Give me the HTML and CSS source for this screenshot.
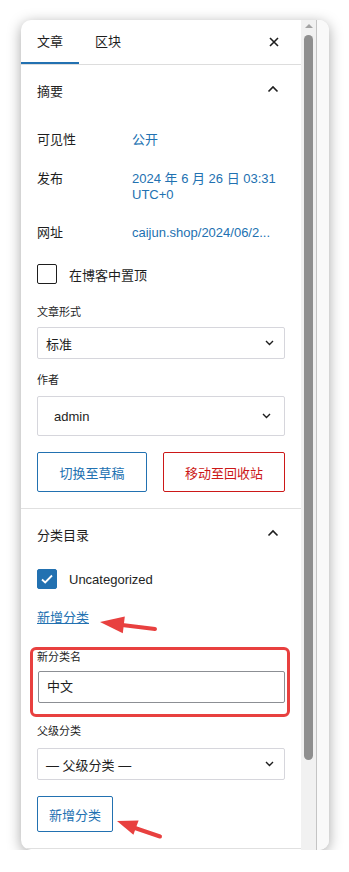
FILE: index.html
```html
<!DOCTYPE html>
<html lang="zh-CN">
<head>
    <meta charset="UTF-8">
    <meta name="viewport" content="width=device-width, initial-scale=1.0">
    <title>文章设置</title>
    <link rel="stylesheet" href="styles.css">
</head>
<body>
    <div class="window">
        <div class="panel">
            <div class="tabs">
                <div class="tab active">文章</div>
                <div class="tab">区块</div>
                <span class="close">
                    <svg width="12" height="12" viewBox="0 0 12 12"><path d="M2 2l8 8M10 2l-8 8" stroke="#1e1e1e" stroke-width="1.6" fill="none"/></svg>
                </span>
            </div>

            <section class="section">
                <div class="section-head">
                    <span>摘要</span>
                    <svg class="chevron" width="12" height="8" viewBox="0 0 12 8"><path d="M1.5 6.5L6 2l4.5 4.5" stroke="#1e1e1e" stroke-width="1.6" fill="none"/></svg>
                </div>
                <div class="section-body">
                    <div class="row">
                        <span class="row-label">可见性</span>
                        <span class="row-value">公开</span>
                    </div>
                    <div class="row row-date">
                        <span class="row-label">发布</span>
                        <span class="row-value">2024 年 6 月 26 日 03:31 UTC+0</span>
                    </div>
                    <div class="row row-url">
                        <span class="row-label">网址</span>
                        <span class="row-value">caijun.shop/2024/06/2...</span>
                    </div>
                    <label class="check check-sticky">
                        <span class="box"></span>
                        <span>在博客中置顶</span>
                    </label>
                    <div class="field-label label-format">文章形式</div>
                    <div class="select select-format">
                        <span>标准</span>
                        <svg width="9" height="6" viewBox="0 0 9 6"><path d="M1 1l3.5 3.5L8 1" stroke="#1e1e1e" stroke-width="1.4" fill="none"/></svg>
                    </div>
                    <div class="field-label label-author">作者</div>
                    <div class="select select-author">
                        <span>admin</span>
                        <svg width="9" height="6" viewBox="0 0 9 6"><path d="M1 1l3.5 3.5L8 1" stroke="#1e1e1e" stroke-width="1.4" fill="none"/></svg>
                    </div>
                    <div class="actions">
                        <span class="btn btn-draft">切换至草稿</span>
                        <span class="btn btn-trash">移动至回收站</span>
                    </div>
                </div>
            </section>

            <section class="section section-cats">
                <div class="section-head">
                    <span>分类目录</span>
                    <svg class="chevron" width="12" height="8" viewBox="0 0 12 8"><path d="M1.5 6.5L6 2l4.5 4.5" stroke="#1e1e1e" stroke-width="1.6" fill="none"/></svg>
                </div>
                <div class="section-body">
                    <label class="check">
                        <span class="box checked">
                            <svg width="14" height="12" viewBox="0 0 14 12"><path d="M2 6.5l3.2 3L12 2.5" stroke="#fff" stroke-width="1.8" fill="none"/></svg>
                        </span>
                        <span class="latin">Uncategorized</span>
                    </label>
                    <a class="add-link" href="#">新增分类</a>
                    <div class="field-label label-name">新分类名</div>
                    <div class="text-input">中文</div>
                    <div class="field-label label-parent">父级分类</div>
                    <div class="select select-parent">
                        <span>— 父级分类 —</span>
                        <svg width="9" height="6" viewBox="0 0 9 6"><path d="M1 1l3.5 3.5L8 1" stroke="#1e1e1e" stroke-width="1.4" fill="none"/></svg>
                    </div>
                    <span class="btn btn-add">新增分类</span>
                </div>
                <div class="highlight"></div>
            </section>
        </div>

        <div class="scrollbar">
            <span class="scroll-up"></span>
            <span class="scroll-thumb"></span>
        </div>
        <div class="edge"></div>

        <svg class="arrow arrow-link" width="64" height="26" viewBox="0 0 64 26">
            <path d="M22 14.5L59 19" stroke="#e8403f" stroke-width="4" stroke-linecap="round" fill="none"/>
            <polygon points="4,12 28.8,6.6 26.8,23.2" fill="#e8403f"/>
        </svg>
        <svg class="arrow arrow-btn" width="52" height="30" viewBox="0 0 52 30">
            <path d="M19 15L47 24.5" stroke="#e8403f" stroke-width="4" stroke-linecap="round" fill="none"/>
            <polygon points="4,9 25.6,8.4 20.4,22.8" fill="#e8403f"/>
        </svg>
    </div>
</body>
</html>
```

FILE: styles.css
```css
* {
    box-sizing: border-box;
}
body {
    margin: 0;
    padding: 20px 0 0 21px;
    background-color: #ffffff;
    font-family: "Liberation Sans", "Noto Sans CJK SC", sans-serif;
    font-size: 13px;
    color: #1e1e1e;
}
.window {
    position: relative;
    display: flex;
    width: 308px;
    height: 830px;
    background-color: #ffffff;
    border-radius: 10px;
    overflow: hidden;
    box-shadow: 0 3px 14px rgba(0, 0, 0, 0.35);
}
.panel {
    width: 280px;
    flex-shrink: 0;
}
.tabs {
    display: flex;
    align-items: center;
    height: 45px;
    border-bottom: 1px solid #dddddd;
}
.tab {
    height: 44px;
    line-height: 44px;
    padding: 0 16px;
    width: 58px;
}
.tab.active {
    box-shadow: inset 0 -2px 0 #2271b1;
}
.close {
    margin-left: auto;
    margin-right: 21px;
    display: flex;
}
.section {
    position: relative;
    border-bottom: 1px solid #e0e0e0;
}
.section-head {
    display: flex;
    align-items: center;
    justify-content: space-between;
    height: 50px;
    padding: 0 22px 0 16px;
}
.chevron {
    margin-top: -2px;
}
.section-body {
    display: flex;
    flex-direction: column;
    padding: 17px 16px 16px;
}
.row {
    display: flex;
    line-height: 16px;
}
.row-label {
    width: 95px;
    flex-shrink: 0;
}
.row-value {
    color: #2271b1;
}
.row-date {
    margin-top: 23px;
}
.row-url {
    margin-top: 22px;
}
.check {
    display: flex;
    align-items: center;
    gap: 12px;
    height: 20px;
}
.check-sticky {
    margin-top: 23px;
}
.box {
    width: 20px;
    height: 20px;
    border: 1px solid #1e1e1e;
    border-radius: 2px;
    display: flex;
    align-items: center;
    justify-content: center;
}
.box.checked {
    background-color: #2271b1;
    border-color: #2271b1;
}
.field-label {
    font-size: 11px;
    line-height: 16px;
}
.label-format {
    margin-top: 20px;
}
.label-author {
    margin-top: 13px;
}
.select {
    display: flex;
    align-items: center;
    justify-content: space-between;
    height: 32px;
    padding: 0 10px 0 8px;
    border: 1px solid #d6d6dc;
    border-radius: 2px;
    margin-top: 7px;
}
.select-author {
    height: 40px;
    margin-top: 8px;
    padding: 0 13px 0 16px;
}
.actions {
    display: flex;
    gap: 16px;
    margin-top: 16px;
}
.btn {
    display: flex;
    align-items: center;
    justify-content: center;
    height: 40px;
    border: 1px solid #2271b1;
    border-radius: 2px;
    color: #2271b1;
}
.btn-draft {
    width: 110px;
}
.btn-trash {
    flex: 1;
    border-color: #cc1818;
    color: #cc1818;
}
.section-cats .section-body {
    padding-top: 10px;
}
.add-link {
    margin-top: 21px;
    line-height: 16px;
    color: #2271b1;
    align-self: flex-start;
}
.label-name {
    margin-top: 23px;
}
.text-input {
    height: 32px;
    line-height: 30px;
    margin-top: 6px;
    margin-left: 1px;
    padding: 0 8px;
    border: 1px solid #8c8f94;
    border-radius: 2px;
}
.label-parent {
    margin-top: 20px;
}
.select-parent {
    margin-top: 9px;
}
.btn-add {
    align-self: flex-start;
    width: 76px;
    height: 36px;
    margin-top: 16px;
}
.highlight {
    position: absolute;
    left: 9px;
    top: 138px;
    width: 260px;
    height: 70px;
    border: 3px solid #e8403f;
    border-radius: 6px;
}
.scrollbar {
    width: 15px;
    flex-shrink: 0;
    background-color: #f1f1f1;
    display: flex;
    flex-direction: column;
    align-items: center;
}
.scroll-up {
    margin-top: 4px;
    width: 0;
    height: 0;
    border-left: 4px solid transparent;
    border-right: 4px solid transparent;
    border-bottom: 4px solid #a3a3a3;
}
.scroll-thumb {
    margin-top: 7px;
    width: 9px;
    height: 725px;
    border-radius: 5px;
    background-color: #8f8f8f;
}
.edge {
    flex: 1;
    border-left: 1px solid #c4c4c4;
    background-color: #f9f9f9;
}
.arrow {
    position: absolute;
}
.arrow-link {
    left: 75px;
    top: 590px;
}
.arrow-btn {
    left: 92px;
    top: 792px;
}
```
